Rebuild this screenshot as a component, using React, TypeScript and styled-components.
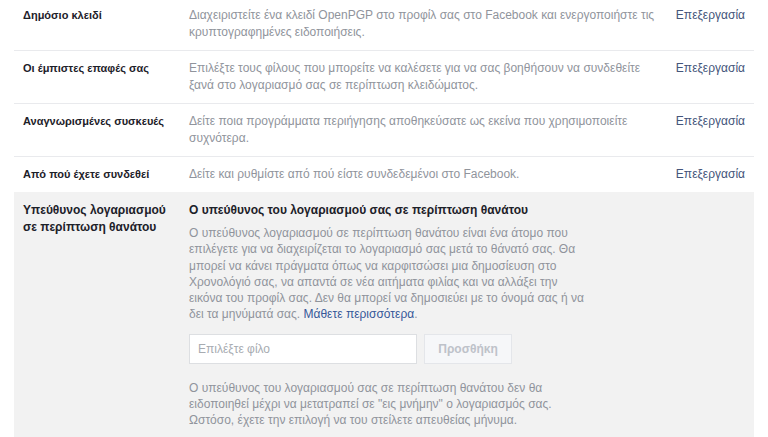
import React from 'react';
import styled, { createGlobalStyle } from 'styled-components';

const GlobalStyle = createGlobalStyle`
	body {
		margin: 0;
		background: #ffffff;
		font-family: 'Liberation Sans', Arial, sans-serif;
		font-size: 12px;
		color: #1d2129;
		overflow: hidden;
	}
`;

const Page = styled.div`
	width: 740px;
	margin: 0 14px;
`;

const SettingsList = styled.div`
	margin-top: -2px;
`;

const SettingRow = styled.div<{ $last?: boolean }>`
	display: grid;
	grid-template-columns: 166px 1fr auto;
	padding: 9px 9px;
	border-bottom: ${({ $last }) => ($last ? 'none' : '1px solid #e9eaed')};
	line-height: 17px;
`;

const Label = styled.div`
	font-size: 11px;
	font-weight: bold;
	color: #1d2129;
`;

const Description = styled.div`
	color: #90949c;
`;

const EditLink = styled.a`
	color: #44557a;
	text-decoration: none;
	cursor: pointer;
	padding-left: 20px;
`;

const ExpandedRow = styled.div`
	display: grid;
	grid-template-columns: 166px 1fr;
	padding: 10px 9px 20px;
	background: #f2f2f2;
`;

const ExpandedLabel = styled.div`
	font-size: 12px;
	font-weight: bold;
	line-height: 17px;
	color: #1d2129;
`;

const ExpandedBody = styled.div`
	display: flex;
	flex-direction: column;
`;

const SectionTitle = styled.div`
	font-size: 12px;
	font-weight: bold;
	line-height: 17px;
	color: #1d2129;
`;

const Paragraph = styled.p<{ $top: number }>`
	margin: ${({ $top }) => `${$top}px 0 0`};
	color: #90949c;
	line-height: 16.3px;
`;

const LearnMore = styled.a`
	color: #365899;
	text-decoration: none;
	cursor: pointer;
`;

const PickerRow = styled.div`
	display: flex;
	gap: 7px;
	margin-top: 11px;
`;

const FriendInput = styled.input`
	width: 228px;
	height: 30px;
	box-sizing: border-box;
	padding: 0 8px;
	border: 1px solid #dddfe2;
	background: #ffffff;
	font-family: 'Liberation Sans', Arial, sans-serif;
	font-size: 12px;
	color: #1d2129;
	outline: none;

	&::placeholder {
		color: #a7abb1;
	}
`;

const AddButton = styled.button`
	width: 88px;
	height: 30px;
	box-sizing: border-box;
	border: 1px solid #e4e6ea;
	background: #f6f7f9;
	color: #bec2c9;
	font-family: 'Liberation Sans', Arial, sans-serif;
	font-size: 12px;
	font-weight: bold;
	cursor: default;
`;

const rows = [
	{
		label: 'Δημόσιο κλειδί',
		lines: [
			'Διαχειριστείτε ένα κλειδί OpenPGP στο προφίλ σας στο Facebook και ενεργοποιήστε τις',
			'κρυπτογραφημένες ειδοποιήσεις.',
		],
	},
	{
		label: 'Οι έμπιστες επαφές σας',
		lines: [
			'Επιλέξτε τους φίλους που μπορείτε να καλέσετε για να σας βοηθήσουν να συνδεθείτε',
			'ξανά στο λογαριασμό σας σε περίπτωση κλειδώματος.',
		],
	},
	{
		label: 'Αναγνωρισμένες συσκευές',
		lines: [
			'Δείτε ποια προγράμματα περιήγησης αποθηκεύσατε ως εκείνα που χρησιμοποιείτε',
			'συχνότερα.',
		],
	},
	{
		label: 'Από πού έχετε συνδεθεί',
		lines: ['Δείτε και ρυθμίστε από πού είστε συνδεδεμένοι στο Facebook.'],
	},
];

const withBreaks = (lines: string[]) =>
	lines.map((line, i) => (
		<React.Fragment key={i}>
			{line}
			{i < lines.length - 1 && <br />}
		</React.Fragment>
	));

const App: React.FC = () => {
	return (
		<Page>
			<GlobalStyle />
			<SettingsList>
				{rows.map((row, i) => (
					<SettingRow key={row.label} $last={i === rows.length - 1}>
						<Label>{row.label}</Label>
						<Description>{withBreaks(row.lines)}</Description>
						<EditLink>Επεξεργασία</EditLink>
					</SettingRow>
				))}
			</SettingsList>

			<ExpandedRow>
				<ExpandedLabel>
					Υπεύθυνος λογαριασμού
					<br />
					σε περίπτωση θανάτου
				</ExpandedLabel>
				<ExpandedBody>
					<SectionTitle>
						Ο υπεύθυνος του λογαριασμού σας σε περίπτωση θανάτου
					</SectionTitle>
					<Paragraph $top={6}>
						{withBreaks([
							'Ο υπεύθυνος λογαριασμού σε περίπτωση θανάτου είναι ένα άτομο που',
							'επιλέγετε για να διαχειρίζεται το λογαριασμό σας μετά το θάνατό σας. Θα',
							'μπορεί να κάνει πράγματα όπως να καρφιτσώσει μια δημοσίευση στο',
							'Χρονολόγιό σας, να απαντά σε νέα αιτήματα φιλίας και να αλλάξει την',
							'εικόνα του προφίλ σας. Δεν θα μπορεί να δημοσιεύει με το όνομά σας ή να',
						])}
						<br />
						δει τα μηνύματά σας. <LearnMore>Μάθετε περισσότερα</LearnMore>.
					</Paragraph>
					<PickerRow>
						<FriendInput placeholder="Επιλέξτε φίλο" />
						<AddButton>Προσθήκη</AddButton>
					</PickerRow>
					<Paragraph $top={16}>
						{withBreaks([
							'Ο υπεύθυνος του λογαριασμού σας σε περίπτωση θανάτου δεν θα',
							'ειδοποιηθεί μέχρι να μετατραπεί σε "εις μνήμην" ο λογαριασμός σας.',
							'Ωστόσο, έχετε την επιλογή να του στείλετε απευθείας μήνυμα.',
						])}
					</Paragraph>
				</ExpandedBody>
			</ExpandedRow>
		</Page>
	);
};

export default App;
